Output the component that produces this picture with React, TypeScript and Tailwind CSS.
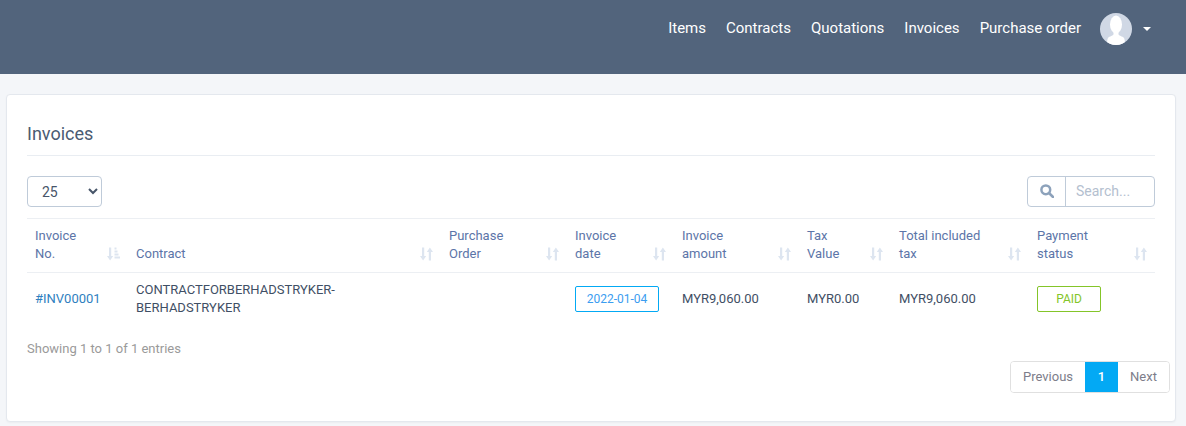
import React from "react";

function SortIcon({ active = false }: { active?: boolean }) {
  return (
    <svg viewBox="0 0 13 14" className="absolute right-[8px] top-[28px] h-[14px] w-[13px]" fill="#dde5f0">
      <path d="M2 0.500h2.200v8.500h2L3.100 13.500 0 9h2z" />
      {active ? (
        <>
          <rect x="7.500" y="0.500" width="2" height="2" />
          <rect x="7.500" y="3.500" width="3" height="2" />
          <rect x="7.500" y="6.500" width="4" height="2" />
          <rect x="7.500" y="9.500" width="5.500" height="2" />
        </>
      ) : (
        <path d="M11 13.500H8.800V5h-2l3.100-4.500L13 5h-2z" />
      )}
    </svg>
  );
}

const columns: { label: React.ReactNode; width: string; active?: boolean }[] = [
  { label: <>Invoice<br />No.</>, width: "w-[101px]", active: true },
  { label: "Contract", width: "w-[313px]" },
  { label: <>Purchase<br />Order</>, width: "w-[126px]" },
  { label: <>Invoice<br />date</>, width: "w-[107px]" },
  { label: <>Invoice<br />amount</>, width: "w-[125px]" },
  { label: <>Tax<br />Value</>, width: "w-[92px]" },
  { label: <>Total included<br />tax</>, width: "w-[138px]" },
  { label: <>Payment<br />status</>, width: "w-[126px]" },
];

export default function App() {
  return (
    <div className="h-[426px] overflow-hidden bg-[#f4f6f9] font-['Roboto',sans-serif] text-[13px] text-[#3f4f65]">
      <header className="flex h-[74px] items-start justify-end bg-[#52647c] pr-[35px] pt-[13px]">
        <nav className="flex items-center">
          {["Items", "Contracts", "Quotations", "Invoices", "Purchase order"].map((item) => (
            <a key={item} className="ml-[20px] block h-[32px] text-[15px] leading-[31px] text-white">
              {item}
            </a>
          ))}
          <svg viewBox="0 0 32 32" className="ml-[19px] h-[32px] w-[32px] rounded-full bg-[#d0d8e5]">
            <ellipse cx="16" cy="11.500" rx="6" ry="9" fill="#fff" />
            <path d="M13.500 17h5v4c0 2 4 2 5.500 4 1 1.500 1 7 1 7H7s0-5.500 1-7c1.500-2 5.500-2 5.500-4z" fill="#fff" />
          </svg>
          <span className="ml-[11px] h-0 w-0 border-x-[4px] border-t-[4px] border-x-transparent border-t-white" />
        </nav>
      </header>

      <main className="pl-[6px] pr-[10px] pt-[20px]">
        <section className="h-[328px] rounded-[4px] border border-[#e4e8ee] bg-white px-[20px] shadow-[0_1px_2px_rgba(0,0,0,0.04)]">
          <h4 className="border-b border-[#e9edf2] pb-[10px] pt-[27px] text-[18px] leading-[23px] text-[#4a5b73]">
            Invoices
          </h4>

          <div className="mt-[20px] flex h-[31px] justify-between">
            <select
              defaultValue="25"
              className="h-[31px] w-[75px] rounded-[4px] border border-[#bfcbd9] bg-white pl-[10px] text-[14px] text-[#475569]"
            >
              <option>25</option>
            </select>
            <div className="flex h-[31px] w-[128px] rounded-[4px] border border-[#bfcbd9]">
              <span className="flex w-[38px] items-center justify-center border-r border-[#bfcbd9]">
                <svg viewBox="0 0 14 14" className="-mt-[1px] h-[14px] w-[14px]" fill="none" stroke="#8da2bb" strokeWidth="2.500">
                  <circle cx="5.800" cy="5.800" r="4.400" />
                  <path d="M9 9l4 4" strokeLinecap="round" />
                </svg>
              </span>
              <span className="pl-[10px] text-[14px] leading-[29px] text-[#b4c0cf]">Search...</span>
            </div>
          </div>

          <table className="mt-[11px] w-[1128px] table-fixed border-collapse">
            <thead>
              <tr className="border-y border-[#eceff3]">
                {columns.map((col, i) => (
                  <th
                    key={i}
                    className={`${col.width} relative h-[54px] px-[8px] pb-[9px] align-bottom text-left text-[13px] font-normal leading-[18px] text-[#5c75a8]`}
                  >
                    {col.label}
                    <SortIcon active={col.active} />
                  </th>
                ))}
              </tr>
            </thead>
            <tbody>
              <tr className="leading-[18px]">
                <td className="h-[52px] px-[8px] text-[#2f7fc0]">#INV00001</td>
                <td className="px-[8px]">CONTRACTFORBERHADSTRYKER-<br />BERHADSTRYKER</td>
                <td className="px-[8px]" />
                <td className="px-[8px]">
                  <span className="block h-[26px] w-[84px] rounded-[2px] border border-[#03a9f4] text-center text-[12px] leading-[24px] text-[#3b9df0]">
                    2022-01-04
                  </span>
                </td>
                <td className="px-[8px]">MYR9,060.00</td>
                <td className="px-[8px]">MYR0.00</td>
                <td className="px-[8px]">MYR9,060.00</td>
                <td className="px-[8px]">
                  <span className="block h-[26px] w-[64px] rounded-[2px] border border-[#84c529] text-center text-[12px] leading-[24px] text-[#84c529]">
                    PAID
                  </span>
                </td>
              </tr>
            </tbody>
          </table>

          <p className="mt-[15px] leading-[18px] text-[#9a9a9a]">Showing 1 to 1 of 1 entries</p>

          <div className="-mr-[15px] mt-[3px] flex justify-end">
            <div className="flex h-[32px] overflow-hidden rounded-[4px] border border-[#e0e0e0] text-[#7d7d8a]">
              <span className="flex w-[74px] items-center justify-center bg-white">Previous</span>
              <span className="-my-px flex w-[33px] items-center justify-center bg-[#03a9f4] font-medium text-white">1</span>
              <span className="flex w-[51px] items-center justify-center bg-white">Next</span>
            </div>
          </div>
        </section>
      </main>
    </div>
  );
}
